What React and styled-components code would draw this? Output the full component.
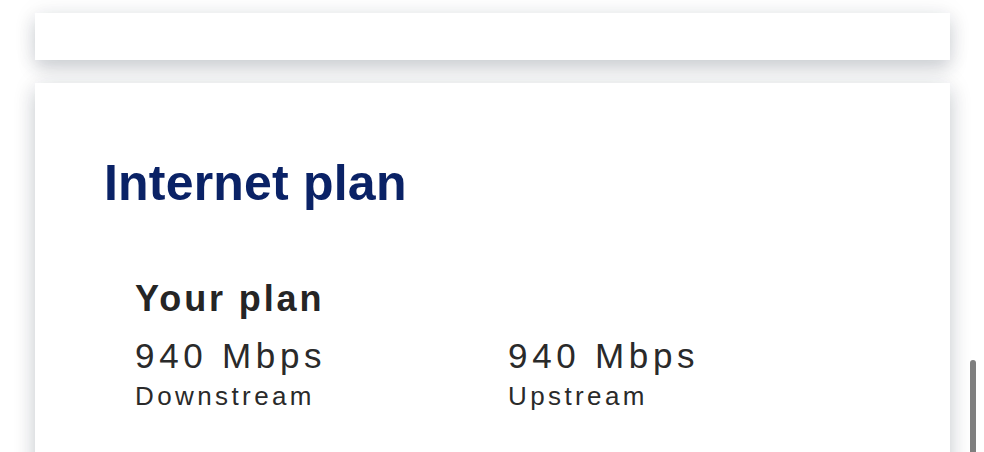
import React from "react";
import styled, { createGlobalStyle } from "styled-components";

const Global = createGlobalStyle`
  html, body { margin: 0; padding: 0; background: #ffffff; overflow: hidden; }
  body { font-family: "Liberation Sans", Arial, sans-serif; }
`;

const Page = styled.div`
  width: 984px;
  height: 452px;
  overflow: hidden;
  padding: 13px 0 0 35px;
  box-sizing: border-box;
  display: flex;
  flex-direction: column;
  gap: 23px;
`;

const Card = styled.section`
  width: 915px;
  background: #ffffff;
  box-shadow: 0 8px 18px rgba(30, 40, 60, 0.2), 0 0 26px rgba(30, 40, 60, 0.07);
  box-sizing: border-box;
  flex: none;
  height: ${(p) => p.$h}px;
`;

const PlanCard = styled(Card)`
  padding: 75px 0 0 69px;
`;

const Heading = styled.h2`
  margin: 0;
  font-size: 50px;
  line-height: 50px;
  font-weight: 700;
  letter-spacing: 0.2px;
  color: #0a2266;
`;

const PlanBlock = styled.div`
  margin: 73px 0 0 31px;
`;

const SubHeading = styled.h3`
  margin: 0;
  font-size: 36px;
  line-height: 36px;
  font-weight: 700;
  letter-spacing: 2.9px;
  color: #252525;
`;

const Speeds = styled.div`
  display: grid;
  grid-template-columns: 373px 373px;
  margin-top: 24px;
`;

const Speed = styled.div`
  display: flex;
  flex-direction: column;
  gap: 13px;
`;

const Value = styled.div`
  font-size: 35px;
  line-height: 30px;
  letter-spacing: 4.7px;
  color: #2a2a2a;
`;

const Label = styled.div`
  font-size: 26px;
  line-height: 24px;
  letter-spacing: 3.4px;
  color: #2a2a2a;
`;

const ScrollThumb = styled.div`
  position: fixed;
  left: 970px;
  top: 360px;
  width: 6px;
  height: 110px;
  border-radius: 3px;
  background: #7f7f7f;
`;

export default function App() {
  const speeds = [
    { value: "940 Mbps", label: "Downstream" },
    { value: "940 Mbps", label: "Upstream" },
  ];
  return (
    <>
      <Global />
      <Page>
        <Card $h={47} />
        <PlanCard $h={400}>
          <Heading>Internet plan</Heading>
          <PlanBlock>
            <SubHeading>Your plan</SubHeading>
            <Speeds>
              {speeds.map((s) => (
                <Speed key={s.label}>
                  <Value>{s.value}</Value>
                  <Label>{s.label}</Label>
                </Speed>
              ))}
            </Speeds>
          </PlanBlock>
        </PlanCard>
      </Page>
      <ScrollThumb />
    </>
  );
}
